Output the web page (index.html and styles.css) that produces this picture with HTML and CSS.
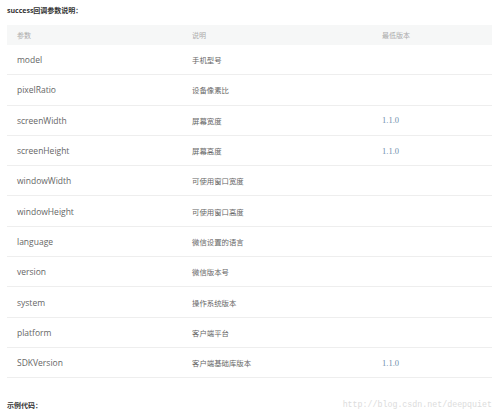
FILE: index.html
```html
<!DOCTYPE html>
<html lang="zh-CN">
<head>
<meta charset="utf-8">
<link rel="stylesheet" href="styles.css">
</head>
<body>
<div class="page">
  <h3 class="title">success回调参数说明：</h3>
  <div class="table">
    <div class="row head">
      <div class="c1 cjk">参数</div><div class="c2 cjk">说明</div><div class="c3 cjk">最低版本</div>
    </div>
    <div class="row"><div class="c1">model</div><div class="c2 cjk">手机型号</div><div class="c3"></div></div>
    <div class="row"><div class="c1">pixelRatio</div><div class="c2 cjk">设备像素比</div><div class="c3"></div></div>
    <div class="row"><div class="c1">screenWidth</div><div class="c2 cjk">屏幕宽度</div><div class="c3 ver">1.1.0</div></div>
    <div class="row"><div class="c1">screenHeight</div><div class="c2 cjk">屏幕高度</div><div class="c3 ver">1.1.0</div></div>
    <div class="row"><div class="c1">windowWidth</div><div class="c2 cjk">可使用窗口宽度</div><div class="c3"></div></div>
    <div class="row"><div class="c1">windowHeight</div><div class="c2 cjk">可使用窗口高度</div><div class="c3"></div></div>
    <div class="row"><div class="c1">language</div><div class="c2 cjk">微信设置的语言</div><div class="c3"></div></div>
    <div class="row"><div class="c1">version</div><div class="c2 cjk">微信版本号</div><div class="c3"></div></div>
    <div class="row"><div class="c1">system</div><div class="c2 cjk">操作系统版本</div><div class="c3"></div></div>
    <div class="row"><div class="c1">platform</div><div class="c2 cjk">客户端平台</div><div class="c3"></div></div>
    <div class="row"><div class="c1">SDKVersion</div><div class="c2 cjk">客户端基础库版本</div><div class="c3 ver">1.1.0</div></div>
  </div>
  <div class="footer">
    <h3 class="title">示例代码：</h3>
    <span class="mark">http://blog.csdn.net/deepquiet</span>
  </div>
</div>
</body>
</html>
```
FILE: styles.css
```css
html, body {
  margin: 0;
  padding: 0;
  background: #fff;
}
.page {
  width: 500px;
  height: 415px;
  padding: 0 8px 0 7px;
  box-sizing: border-box;
  font-family: "Open Sans", "Noto Sans CJK SC", sans-serif;
  color: #666;
  overflow: hidden;
}
.title {
  margin: 0;
  font-size: 7px;
  font-weight: 700;
  color: #333;
  line-height: 10px;
  padding-top: 6px;
  height: 25px;
  box-sizing: border-box;
}
.table {
  display: flex;
  flex-direction: column;
}
.row {
  display: grid;
  grid-template-columns: 175px 190px 1fr;
  align-items: center;
  height: 30.3px;
  border-bottom: 1px solid #eeeeee;
  box-sizing: border-box;
  font-size: 8.5px;
}
.row > div {
  padding-left: 10px;
}
.row.head {
  height: 20px;
  background: #f6f7f7;
  border-bottom: none;
  color: #aaa;
}
.cjk {
  font-size: 7.4px;
}
.head .cjk {
  font-size: 7px;
}
.ver {
  color: #6f8fae;
  font-family: "Liberation Serif", serif;
  font-size: 8.5px;
}
.footer {
  display: flex;
  align-items: center;
  justify-content: space-between;
  margin-top: 23px;
}
.footer .title {
  padding-top: 0;
  height: auto;
}
.mark {
  font-family: "Liberation Mono", monospace;
  font-size: 8.3px;
  color: #dcdcdc;
  margin-top: -3px;
}
```
